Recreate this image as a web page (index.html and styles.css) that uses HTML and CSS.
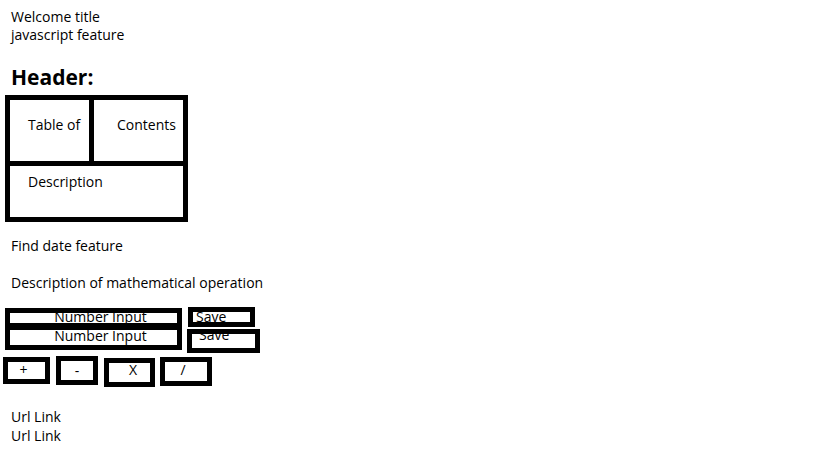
FILE: index.html
```html
<!DOCTYPE html>
<html lang="en">
<head>
  <meta charset="UTF-8" />
  <meta name="viewport" content="width=device-width, initial-scale=1.0"/>
  <title>Wireframe</title>
  <link rel="stylesheet" href="styles.css">
</head>
<body>
  <div class="page">
    <p class="line">Welcome title</p>
    <p class="line">javascript feature</p>

    <h1 class="header">Header:</h1>

    <!-- Table of contents box -->
    <div class="toc-box">
      <div class="toc-row">
        <div class="cell cell-left">Table of</div>
        <div class="cell cell-right">Contents</div>
      </div>
      <div class="cell cell-desc">Description</div>
    </div>

    <p class="line date-line">Find date feature</p>
    <p class="line math-line">Description of mathematical operation</p>

    <!-- Calculator inputs -->
    <div class="input-row row-one">
      <div class="num-input num-one"><span class="label">Number Input</span></div>
      <div class="save save-one"><span class="label">Save</span></div>
    </div>
    <div class="input-row row-two">
      <div class="num-input num-two"><span class="label">Number Input</span></div>
      <div class="save save-two"><span class="label">Save</span></div>
    </div>

    <div class="ops">
      <div class="op op-plus">+</div>
      <div class="op op-minus">-</div>
      <div class="op op-times">X</div>
      <div class="op op-div">/</div>
    </div>

    <div class="links">
      <a href="#" class="url-link">Url Link</a>
      <a href="#" class="url-link">Url Link</a>
    </div>
  </div>
</body>
</html>
```

FILE: styles.css
```css
body {
  margin: 0;
  background-color: white;
  font-family: 'Open Sans', 'Noto Sans', sans-serif;
  font-size: 14px;
  line-height: 18px;
  color: #000;
}

.page {
  padding: 8px 0 0 5px;
}

.line {
  margin: 0;
  padding-left: 6px;
}

.header {
  margin: 21px 0 6px;
  padding-left: 6px;
  font-size: 21px;
  line-height: 24px;
  font-weight: 700;
}

/* Table of contents box */
.toc-box {
  width: 173px;
  border: 5px solid #000;
}

.toc-row {
  display: flex;
  height: 61px;
  border-bottom: 5px solid #000;
}

.cell {
  box-sizing: border-box;
}

.cell-left {
  width: 84px;
  padding: 16px 0 0 18px;
  border-right: 5px solid #000;
}

.cell-right {
  flex: 1;
  padding: 16px 0 0 23px;
}

.cell-desc {
  height: 51px;
  padding: 7px 0 0 18px;
}

.date-line {
  margin-top: 15px;
}

.math-line {
  margin-top: 19px;
}

/* Number inputs and save buttons */
.input-row {
  display: flex;
  align-items: flex-start;
}

.row-one {
  margin-top: 15px;
  height: 18px;
}

.row-two {
  height: 28px;
}

.label {
  display: block;
  white-space: nowrap;
}

.num-input {
  width: 153px;
  padding-left: 14px;
  border: 5px solid #000;
  text-align: center;
}

.num-one {
  margin-top: 1px;
  height: 10px;
  border-bottom-width: 2px;
}

.num-one .label {
  margin-top: -5px;
}

.num-two {
  height: 15px;
}

.num-two .label {
  margin-top: -3px;
}

.save {
  border: 5px solid #000;
}

.save-one {
  margin-left: 6px;
  width: 54px;
  height: 10px;
  padding-left: 3px;
}

.save-one .label {
  margin-top: -4px;
}

.save-two {
  margin: 4px 0 0 5px;
  width: 56px;
  height: 14px;
  padding-left: 7px;
}

.save-two .label {
  margin-top: -8px;
}

/* Operation buttons */
.ops {
  display: flex;
  align-items: flex-start;
  margin: 3px 0 0 -2px;
  height: 31px;
}

.op {
  display: flex;
  align-items: center;
  justify-content: center;
  border: 5px solid #000;
  box-sizing: border-box;
  height: 29px;
}

.op-plus {
  width: 47px;
  height: 27px;
  margin-top: 1px;
  padding: 0 6px 2px 0;
}

.op-minus {
  width: 42px;
  margin-left: 6px;
}

.op-times {
  width: 51px;
  margin: 2px 0 0 6px;
  padding: 0 0 6px 7px;
}

.op-div {
  width: 52px;
  margin: 1px 0 0 5px;
  padding: 0 6px 3px 0;
}

.links {
  margin-top: 20px;
  padding-left: 6px;
}

.url-link {
  display: block;
  line-height: 19px;
  color: #000;
  text-decoration: none;
}
```
